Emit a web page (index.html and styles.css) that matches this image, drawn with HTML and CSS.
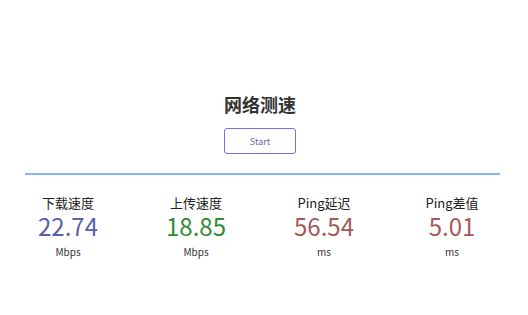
FILE: index.html
```html
<!DOCTYPE html>
<html lang="zh-CN">
<head>
  <meta charset="UTF-8">
  <title>网络测速</title>
  <link rel="stylesheet" href="styles.css">
</head>
<body>

  <div class="page">
    <h1 class="title">网络测速</h1>
    <button class="start-btn">Start</button>
    <div class="divider"></div>

    <div class="stats">
      <div class="stat">
        <div class="stat-label">下载速度</div>
        <div class="stat-value down">22.74</div>
        <div class="stat-unit">Mbps</div>
      </div>
      <div class="stat">
        <div class="stat-label">上传速度</div>
        <div class="stat-value up">18.85</div>
        <div class="stat-unit">Mbps</div>
      </div>
      <div class="stat">
        <div class="stat-label">Ping延迟</div>
        <div class="stat-value ping">56.54</div>
        <div class="stat-unit">ms</div>
      </div>
      <div class="stat">
        <div class="stat-label">Ping差值</div>
        <div class="stat-value ping">5.01</div>
        <div class="stat-unit">ms</div>
      </div>
    </div>
  </div>

</body>
</html>
```

FILE: styles.css
```css
body {
  margin: 0;
  padding: 0;
  font-family: 'Noto Sans CJK SC', 'Noto Sans', sans-serif;
  background: #fff;
  color: #333;
}

.page {
  width: 520px;
  padding-top: 92px;
  display: flex;
  flex-direction: column;
  align-items: center;
}

.title {
  margin: 0;
  font-size: 18px;
  line-height: 24px;
  font-weight: bold;
  color: #333;
}

.start-btn {
  margin-top: 12px;
  width: 72px;
  height: 26px;
  background: #fff;
  border: 1px solid #6f6ff0;
  border-radius: 3px;
  font-family: inherit;
  font-size: 9px;
  color: #6a6aa8;
  cursor: pointer;
}

.divider {
  align-self: flex-start;
  margin: 19px 0 0 25px;
  width: 475px;
  height: 2px;
  background: #8ab4f8;
}

.stats {
  align-self: flex-start;
  margin: 19px 0 0 4px;
  width: 512px;
  display: grid;
  grid-template-columns: repeat(4, 1fr);
}

.stat {
  display: flex;
  flex-direction: column;
  align-items: center;
}

.stat-label {
  font-size: 13px;
  line-height: 18px;
  color: #222;
}

.stat-value {
  margin-top: 1px;
  font-size: 24px;
  line-height: 26px;
}

.stat-unit {
  margin-top: 6px;
  font-size: 10px;
  line-height: 14px;
  color: #333;
}

.down { color: #5c5ea8; }
.up { color: #2e8b34; }
.ping { color: #a55a5a; }
```
